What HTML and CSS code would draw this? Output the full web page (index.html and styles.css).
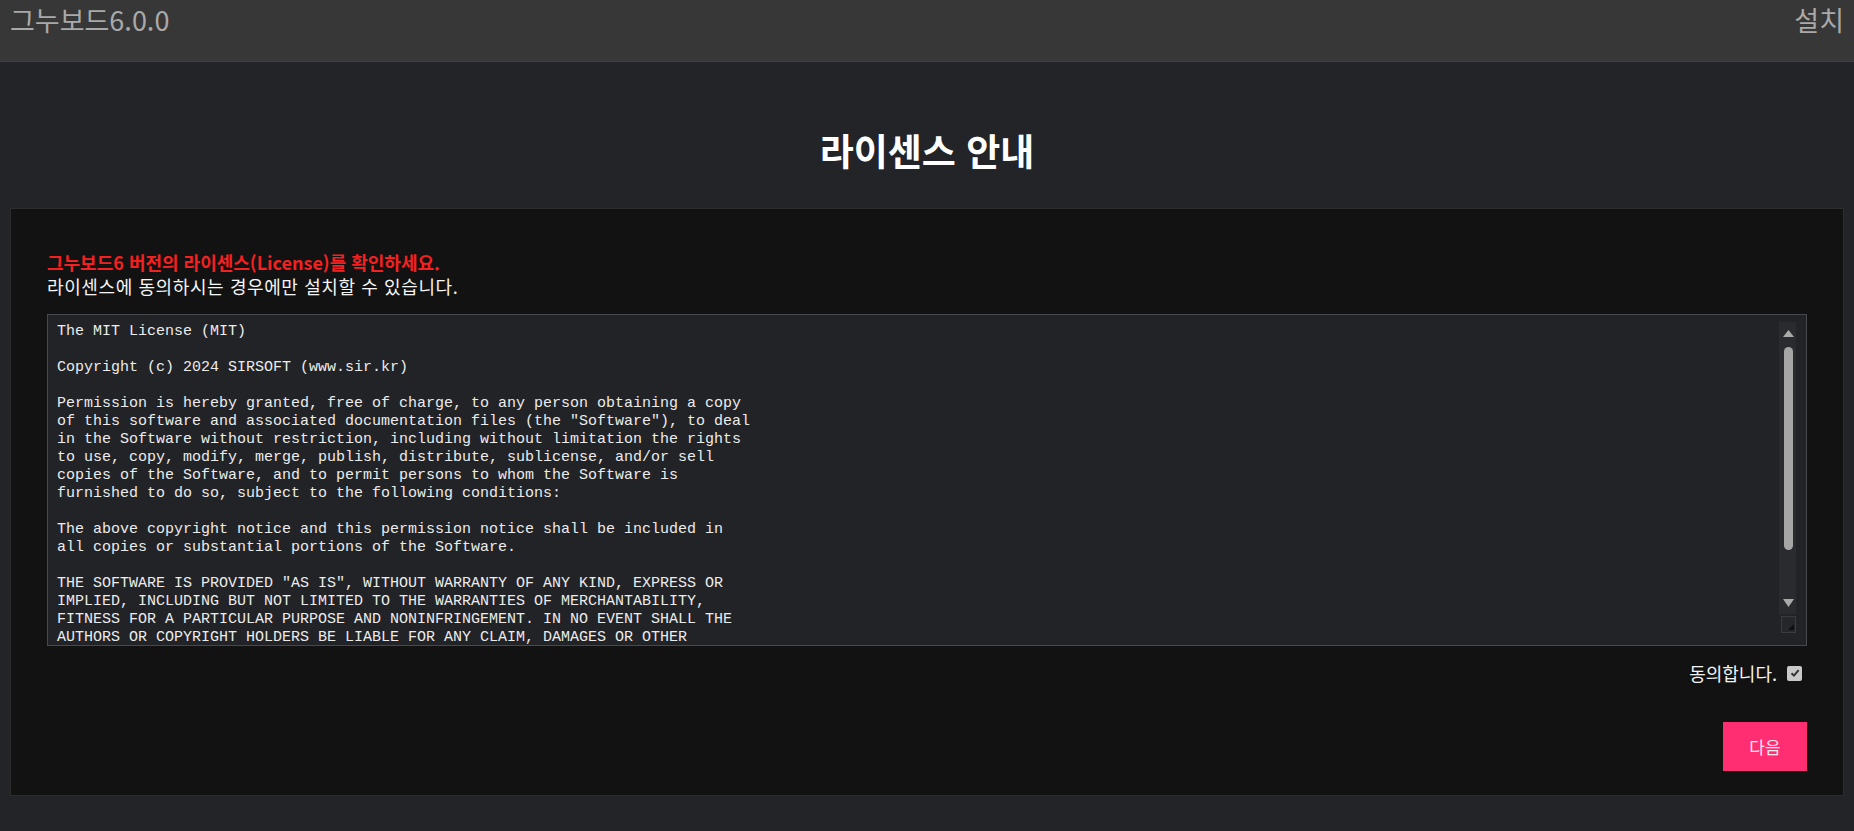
FILE: index.html
```html
<!DOCTYPE html>
<html lang="ko">
<head>
  <meta charset="UTF-8" />
  <meta name="viewport" content="width=device-width, initial-scale=1.0"/>
  <title>그누보드6 설치</title>
  <link rel="stylesheet" href="styles.css">
</head>
<body>
  <header class="top-bar">
    <span class="brand">그누보드6.0.0</span>
    <span class="step">설치</span>
  </header>

  <main class="install">
    <h1 class="page-title">라이센스 안내</h1>

    <section class="panel">
      <p class="notice">
        <strong class="warn">그누보드6 버전의 라이센스(License)를 확인하세요.</strong><br>
        라이센스에 동의하시는 경우에만 설치할 수 있습니다.
      </p>

      <!-- license text box -->
      <div class="license-box">
<pre class="license-text">The MIT License (MIT)

Copyright (c) 2024 SIRSOFT (www.sir.kr)

Permission is hereby granted, free of charge, to any person obtaining a copy
of this software and associated documentation files (the "Software"), to deal
in the Software without restriction, including without limitation the rights
to use, copy, modify, merge, publish, distribute, sublicense, and/or sell
copies of the Software, and to permit persons to whom the Software is
furnished to do so, subject to the following conditions:

The above copyright notice and this permission notice shall be included in
all copies or substantial portions of the Software.

THE SOFTWARE IS PROVIDED "AS IS", WITHOUT WARRANTY OF ANY KIND, EXPRESS OR
IMPLIED, INCLUDING BUT NOT LIMITED TO THE WARRANTIES OF MERCHANTABILITY,
FITNESS FOR A PARTICULAR PURPOSE AND NONINFRINGEMENT. IN NO EVENT SHALL THE
AUTHORS OR COPYRIGHT HOLDERS BE LIABLE FOR ANY CLAIM, DAMAGES OR OTHER
LIABILITY, WHETHER IN AN ACTION OF CONTRACT, TORT OR OTHERWISE, ARISING FROM,
OUT OF OR IN CONNECTION WITH THE SOFTWARE OR THE USE OR OTHER DEALINGS IN
THE SOFTWARE.</pre>
        <svg class="scrollbar" width="17" height="311" viewBox="0 0 17 311">
          <rect x="0" y="0" width="17" height="292" fill="#2a2b2f"/>
          <polygon points="9.5,8 4,15 15,15" fill="#a9a9a9"/>
          <rect x="5" y="25" width="9" height="203" rx="4.5" fill="#a6a6a6"/>
          <polygon points="4,277 15,277 9.5,285" fill="#a9a9a9"/>
          <rect x="2.5" y="294.5" width="14" height="16" fill="#26272b" stroke="#3a3b3f"/>
          <polygon points="15,308 15,302 9,308" fill="#0e0e0e"/>
        </svg>
      </div>

      <label class="agree">
        동의합니다.
        <span class="check">
          <svg width="10" height="10" viewBox="0 0 10 10"><path d="M1.5 5.2 L4 7.6 L8.6 2.2" fill="none" stroke="#333" stroke-width="2"/></svg>
        </span>
      </label>

      <div class="actions">
        <button type="button" class="btn-next">다음</button>
      </div>
    </section>
  </main>
</body>
</html>
```

FILE: styles.css
```css
body {
  margin: 0;
  background-color: #222428;
  font-family: "Noto Sans CJK KR", "Noto Sans", sans-serif;
  color: #f2f2f2;
}

.top-bar {
  display: flex;
  justify-content: space-between;
  align-items: flex-start;
  height: 62px;
  box-sizing: border-box;
  padding: 3px 10px 0;
  background: #373737;
  border-bottom: 1px solid #414141;
  font-size: 27px;
  line-height: 34px;
  color: #a9a9a9;
}

.install {
  padding-top: 67px;
}

.page-title {
  margin: 0 0 37px;
  text-align: center;
  font-size: 37px;
  line-height: 42px;
  font-weight: bold;
  color: #ffffff;
}

.panel {
  margin: 0 10px;
  padding: 41px 36px 24px;
  background: #121212;
  border: 1px solid #2c2c2c;
}

.notice {
  margin: 0 0 16px;
  font-size: 18px;
  line-height: 24px;
  letter-spacing: 0.6px;
  color: #f5f5f5;
}

.warn {
  color: #f52020;
  font-weight: bold;
  letter-spacing: 0;
}

.license-box {
  position: relative;
  height: 332px;
  box-sizing: border-box;
  background: #222327;
  border: 1px solid #48494c;
  overflow: hidden;
}

.license-text {
  margin: 0;
  padding: 8px 9px;
  font-family: "Liberation Mono", monospace;
  font-size: 15px;
  line-height: 18px;
  color: #ececec;
}

.scrollbar {
  position: absolute;
  top: 7px;
  right: 10px;
}

.agree {
  display: flex;
  justify-content: flex-end;
  align-items: center;
  gap: 10px;
  margin-top: 15px;
  padding-right: 5px;
  font-size: 18px;
  line-height: 24px;
  color: #f5f5f5;
}

.check {
  display: flex;
  justify-content: center;
  align-items: center;
  width: 15px;
  height: 15px;
  border-radius: 2px;
  background: #c9c9c9;
}

.actions {
  display: flex;
  justify-content: flex-end;
  margin-top: 37px;
}

.btn-next {
  width: 84px;
  height: 49px;
  border: none;
  background: #ff2d72;
  color: #ffe6ef;
  font-family: inherit;
  font-size: 17px;
  cursor: pointer;
}
```
